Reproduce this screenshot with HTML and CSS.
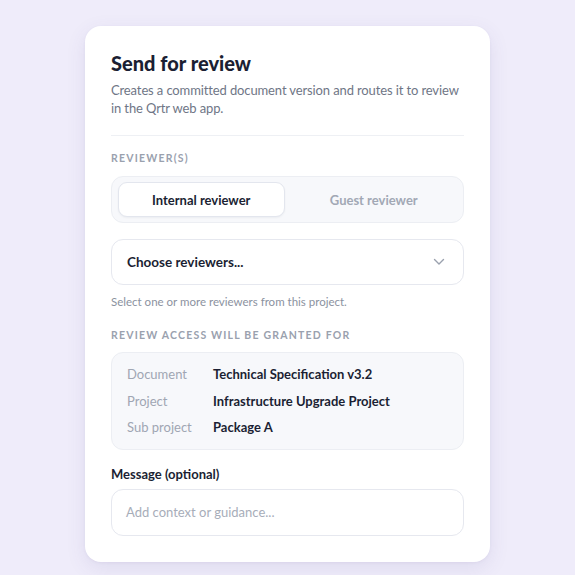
FILE: index.html
```html
<!DOCTYPE html>
<html lang="en">
<head>
    <meta charset="UTF-8">
    <meta name="viewport" content="width=device-width, initial-scale=1.0">
    <title>Send for review</title>
    <link rel="stylesheet" href="styles.css">
</head>
<body>
    <div class="card">
        <div class="card-header">
            <h1>Send for review</h1>
            <p>Creates a committed document version and routes it to review in the Qrtr web app.</p>
        </div>

        <div class="section-label">Reviewer(s)</div>
        <div class="segmented">
            <button class="active">Internal reviewer</button>
            <button>Guest reviewer</button>
        </div>

        <div class="select">
            <span>Choose reviewers...</span>
            <svg width="12" height="8" viewBox="0 0 12 8" fill="none">
                <path d="M1.5 1.5 6 6l4.5-4.5" stroke="#9aa1ae" stroke-width="1.4" stroke-linecap="round" stroke-linejoin="round"/>
            </svg>
        </div>
        <div class="hint">Select one or more reviewers from this project.</div>

        <div class="section-label spaced">Review access will be granted for</div>
        <div class="info-box">
            <div class="info-row"><span class="info-key">Document</span><span class="info-value">Technical Specification v3.2</span></div>
            <div class="info-row"><span class="info-key">Project</span><span class="info-value">Infrastructure Upgrade Project</span></div>
            <div class="info-row"><span class="info-key">Sub project</span><span class="info-value">Package A</span></div>
        </div>

        <div class="field-label">Message (optional)</div>
        <div class="textarea">Add context or guidance...</div>
    </div>
</body>
</html>
```

FILE: styles.css
```css
*, *:after, *:before {
    margin: 0;
    padding: 0;
    box-sizing: border-box;
}

:root {
    --bg: #efecfa;
    --white: #fff;
    --ink: #1b1f33;
    --muted: #6f7686;
    --soft: #9aa1ae;
    --line: #e6e8ef;
    --panel: #f7f8fb;
}

body {
    height: 100vh;
    display: flex;
    justify-content: center;
    padding-top: 26px;
    background: var(--bg);
    font-family: 'Lato', 'Noto Sans', sans-serif;
    color: var(--ink);
}

.card {
    width: 405px;
    height: 536px;
    padding: 24px 26px 25px;
    border-radius: 16px;
    background: var(--white);
    box-shadow: 0 6px 20px rgba(80, 70, 140, 0.10), 0 1px 3px rgba(80, 70, 140, 0.06);
    display: flex;
    flex-direction: column;
}

.card-header {
    padding-bottom: 18px;
    border-bottom: 1px solid #eef0f4;
}

.card-header h1 {
    font-size: 20px;
    font-weight: 900;
    line-height: 26px;
    color: var(--ink);
}

.card-header p {
    margin-top: 6px;
    font-size: 13px;
    line-height: 17.5px;
    letter-spacing: -0.12px;
    color: var(--muted);
}

.section-label {
    margin-top: 16px;
    font-size: 10.5px;
    font-weight: 700;
    letter-spacing: 1.2px;
    text-transform: uppercase;
    color: var(--soft);
}

.section-label.spaced {
    margin-top: 21px;
}

.segmented {
    margin-top: 12px;
    height: 47px;
    padding: 5px 6px;
    display: flex;
    gap: 6px;
    border: 1px solid #eceef3;
    border-radius: 12px;
    background: var(--panel);
}

.segmented button {
    flex: 1;
    border: 1px solid transparent;
    border-radius: 9px;
    background: transparent;
    font-family: inherit;
    font-size: 13px;
    font-weight: 700;
    color: #a2a8b5;
}

.segmented .active {
    background: var(--white);
    border-color: #e3e6ee;
    color: var(--ink);
    box-shadow: 0 1px 2px rgba(20, 30, 60, 0.05);
}

.select {
    margin-top: 16px;
    height: 46px;
    padding: 0 18px 0 15px;
    display: flex;
    align-items: center;
    justify-content: space-between;
    border: 1px solid var(--line);
    border-radius: 12px;
    font-size: 13.5px;
    font-weight: 700;
}

.hint {
    margin-top: 10px;
    font-size: 11.5px;
    color: #8b92a0;
}

.info-box {
    margin-top: 11px;
    height: 98px;
    padding: 12px 15px;
    display: flex;
    flex-direction: column;
    gap: 8.5px;
    border: 1px solid #eceef3;
    border-radius: 12px;
    background: var(--panel);
}

.info-row {
    display: flex;
    font-size: 13px;
    line-height: 18px;
}

.info-key {
    width: 86px;
    color: #a0a6b3;
}

.info-value {
    font-weight: 700;
    color: var(--ink);
}

.field-label {
    margin-top: 16px;
    font-size: 13px;
    font-weight: 700;
}

.textarea {
    margin-top: 7px;
    height: 47px;
    padding: 14px 14px;
    border: 1px solid var(--line);
    border-radius: 12px;
    font-size: 13px;
    color: #a7adb9;
}
```
